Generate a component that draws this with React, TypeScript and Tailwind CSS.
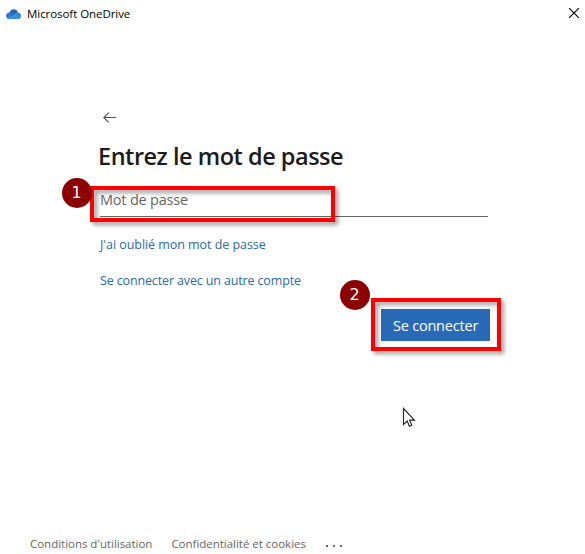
import React from "react";

function Cloud() {
  return (
    <svg className="block h-[10px] w-[15px]" viewBox="0 0 30 20">
      <path d="M7 7C10-1 21-2 24 7L15 14 5 10Z" fill="#2468b4" />
      <path d="M7 7C3 7 0 10 0 14c0 3 3 6 7 6L18 12 12 8C10 7 9 7 7 7Z" fill="#2c78c8" />
      <path d="M18 12 24 7c4 0 6 3 6 6 0 4-2 7-5 7L15 14Z" fill="#3586d4" />
      <path d="M2 18 17 12 29 17c-1 2-3 3-5 3H7c-2 0-4-1-5-2Z" fill="#3b90df" />
    </svg>
  );
}

function Badge({ n, className }: { n: number; className: string }) {
  return (
    <span
      className={`absolute flex size-[30px] items-center justify-center rounded-full bg-[#8b0000] font-['DejaVu_Sans',sans-serif] text-[16px] leading-none text-white ${className}`}
    >
      {n}
    </span>
  );
}

export default function App() {
  return (
    <div className="relative flex h-[554px] w-[585px] flex-col overflow-hidden bg-white font-['Open_Sans','Noto_Sans',sans-serif] text-[#1b1b1b]">
      <header className="flex h-7 items-center justify-between pr-[6px] pl-[6px]">
        <div className="flex items-center gap-[6px]">
          <Cloud />
          <span className="text-[11.5px] leading-4 tracking-[-0.06px] text-black">Microsoft OneDrive</span>
        </div>
        <svg className="mb-[2px] size-[10px]" viewBox="0 0 10 10" stroke="#000" strokeWidth="1.1">
          <path d="M0 0 10 10M10 0 0 10" />
        </svg>
      </header>

      <main className="flex flex-1 flex-col pr-[95px] pl-[98px]">
        <svg className="mt-[84px] ml-[5px] h-[11px] w-[13px]" viewBox="0 0 13 11" fill="none" stroke="#555" strokeWidth="1.1">
          <path d="M13 5.5H1M5.7.6.8 5.5l4.9 4.9" />
        </svg>
        <h1 className="mt-[17px] h-8 text-[23.5px] leading-8 font-semibold tracking-[-0.48px] whitespace-nowrap">
          Entrez le mot de passe
        </h1>
        <div className="mt-[16px] ml-[2px] h-[29px] w-[388px] border-b border-[#666] pt-px">
          <input
            type="text"
            placeholder="Mot de passe"
            className="block h-[22px] w-full bg-transparent p-0 text-[14.5px] leading-[22px] tracking-[-0.2px] outline-none placeholder:text-[#666]"
          />
        </div>
        <a className="mt-[18px] ml-[2px] h-5 text-[12.5px] leading-5 tracking-[-0.05px] whitespace-nowrap text-[#2b69b0]">
          J'ai oublié mon mot de passe
        </a>
        <a className="mt-[16px] ml-[2px] h-5 text-[12.5px] leading-5 tracking-[-0.14px] whitespace-nowrap text-[#2b69b0]">
          Se connecter avec un autre compte
        </a>
        <button className="mt-[18px] h-8 w-[109px] self-end bg-[#296ab6] pt-px text-[14.5px] leading-[31px] tracking-[-0.2px] whitespace-nowrap text-white">
          Se connecter
        </button>
      </main>

      <footer className="flex h-[21px] items-center pl-[30px] text-[11.5px] leading-5 tracking-[-0.02px] whitespace-nowrap text-[#666]">
        <span>Conditions d'utilisation</span>
        <span className="ml-[19px]">Confidentialité et cookies</span>
        <span className="ml-[20px] flex gap-[5px] pt-[4px]">
          <i className="size-[2px] bg-[#666]" />
          <i className="size-[2px] bg-[#666]" />
          <i className="size-[2px] bg-[#666]" />
        </span>
      </footer>

      <div className="absolute top-[186px] left-[90px] h-[36px] w-[245px] border-4 border-[#fe0000] [filter:drop-shadow(3px_3px_2px_rgba(0,0,0,0.4))]" />
      <div className="absolute top-[298px] left-[371px] h-[53px] w-[130px] border-4 border-[#fe0000] [filter:drop-shadow(3px_3px_2px_rgba(0,0,0,0.4))]" />
      <Badge n={1} className="top-[177.5px] left-[61.5px]" />
      <Badge n={2} className="top-[279.5px] left-[339.5px]" />
      <svg className="absolute top-[407px] left-[402px] h-[21px] w-[14px]" viewBox="0 0 14 21">
        <path d="M1.5 1.5v16l3.7-3.5 2.2 5.2 2.4-1-2.2-5.1h4.8Z" fill="#fff" stroke="#222" strokeWidth="1.1" />
      </svg>
    </div>
  );
}
